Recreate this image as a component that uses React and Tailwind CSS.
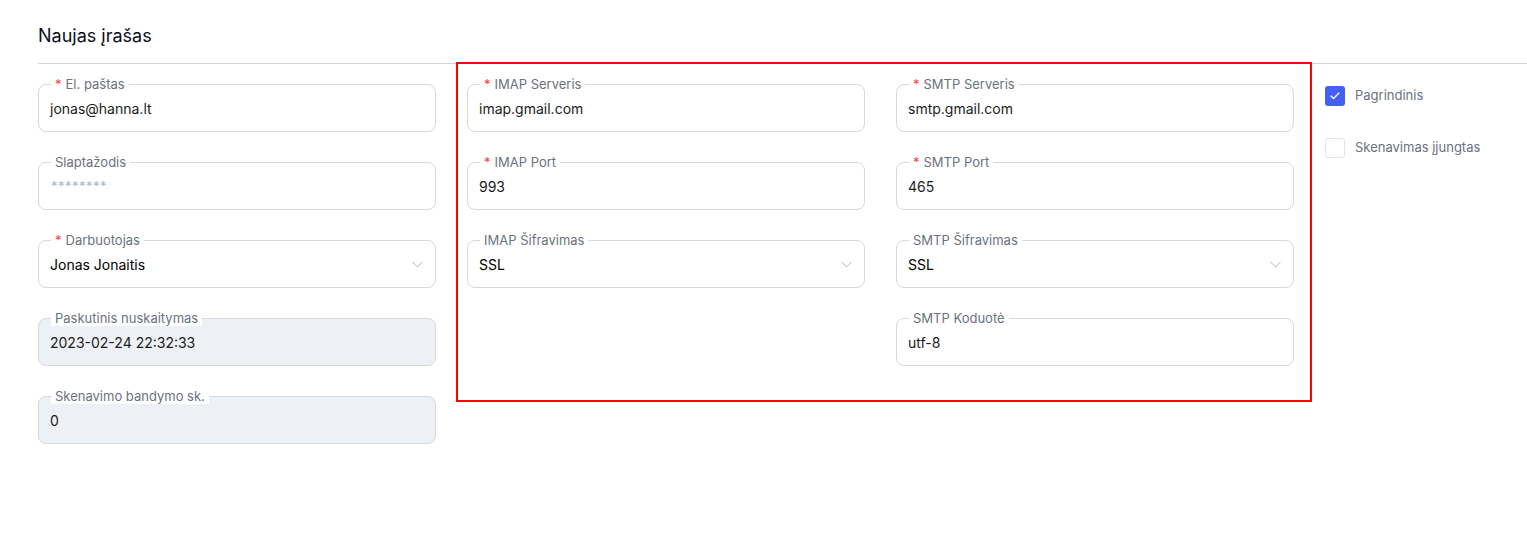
import React from 'react';
import { ChevronDown, Check } from 'lucide-react';

const Field = ({ label, required, value, gray, select, password }) => {
  return (
    <div
      className={`relative flex h-[48px] items-center rounded-lg border border-[#d6d9de] pl-[11px] pr-[8px] ${
        gray ? 'bg-[#edf0f4]' : 'bg-white'
      }`}
    >
      <span className="absolute left-[12px] top-[-9px] bg-white px-[4px] text-[13px] leading-[16px] text-[#6b7280]">
        {required && <span className="mr-[4px] text-[#ef4444]">*</span>}
        {label}
      </span>
      {password ? (
        <span className="mt-[2px] pl-[1px] text-[13px] tracking-[0.5px] text-[#a6b6cc]">{value}</span>
      ) : (
        <span className={`text-[14px] ${select ? 'text-black' : 'text-[#1a1d21]'}`}>{value}</span>
      )}
      {select && <ChevronDown className="ml-auto h-[19px] w-[19px] text-[#c6cedb]" strokeWidth={1.3} />}
    </div>
  );
};

export default function App() {
  return (
    <div className="min-h-[533px] bg-white font-['Inter',sans-serif]">
      <div className="ml-[38px]">
        {/* Header */}
        <div className="flex h-[64px] items-center border-b border-[#d4d4d4] pt-[8px]">
          <h1 className="text-[18px] font-normal text-[#0b0f19]">Naujas įrašas</h1>
        </div>

        <div className="flex items-start">
          {/* Column 1 */}
          <div className="mt-[20px] flex w-[398px] flex-col gap-[30px]">
            <Field label="El. paštas" required value="jonas@hanna.lt" />
            <Field label="Slaptažodis" value="********" password />
            <Field label="Darbuotojas" required value="Jonas Jonaitis" select />
            <Field label="Paskutinis nuskaitymas" value="2023-02-24 22:32:33" gray />
            <Field label="Skenavimo bandymo sk." value="0" gray />
          </div>

          {/* Highlighted mail server block */}
          <div className="ml-[20px] -mt-[2px] flex gap-[31px] border-2 border-[#ff0000] pb-[34px] pl-[9px] pr-[16px] pt-[20px]">
            <div className="flex w-[398px] flex-col gap-[30px]">
              <Field label="IMAP Serveris" required value="imap.gmail.com" />
              <Field label="IMAP Port" required value="993" />
              <Field label="IMAP Šifravimas" value="SSL" select />
            </div>
            <div className="flex w-[398px] flex-col gap-[30px]">
              <Field label="SMTP Serveris" required value="smtp.gmail.com" />
              <Field label="SMTP Port" required value="465" />
              <Field label="SMTP Šifravimas" value="SSL" select />
              <Field label="SMTP Koduotė" value="utf-8" />
            </div>
          </div>

          {/* Checkboxes */}
          <div className="ml-[13px] mt-[22px] flex flex-col gap-[32px]">
            <label className="flex items-center gap-[10px]">
              <span className="flex h-[20px] w-[20px] items-center justify-center rounded-[3px] bg-[#4361ee]">
                <Check className="h-[12px] w-[12px] text-white" strokeWidth={2.5} />
              </span>
              <span className="text-[13px] text-[#6b7280]">Pagrindinis</span>
            </label>
            <label className="flex items-center gap-[10px]">
              <span className="h-[20px] w-[20px] rounded-[3px] border border-[#e3e5e8] bg-white" />
              <span className="text-[13px] text-[#6b7280]">Skenavimas įjungtas</span>
            </label>
          </div>
        </div>
      </div>
    </div>
  );
}
